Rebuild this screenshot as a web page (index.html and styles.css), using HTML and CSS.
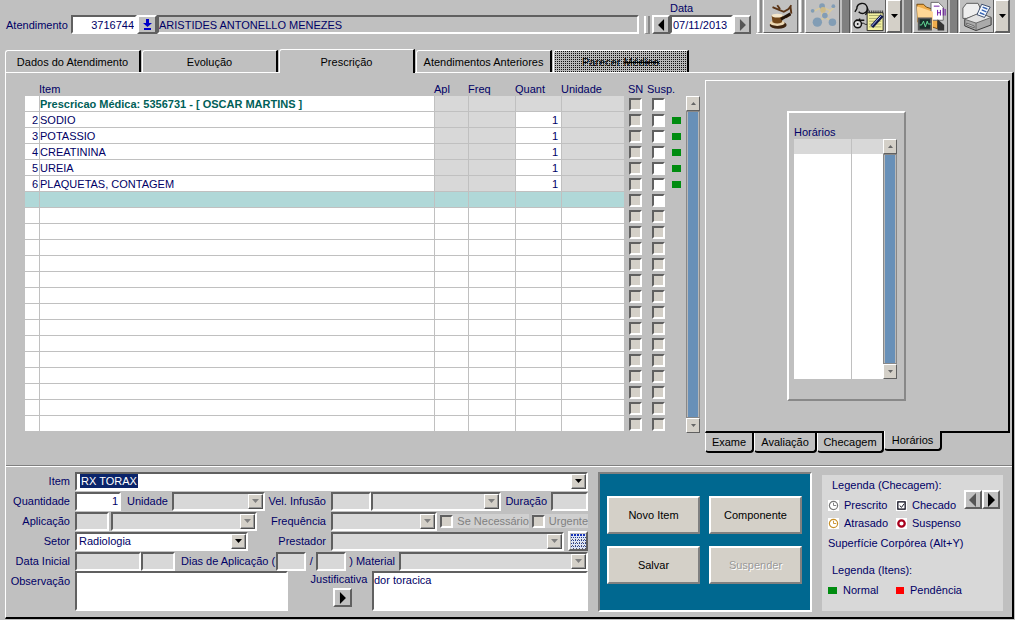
FILE: index.html
```html
<!DOCTYPE html>
<html lang="pt-BR">
<head>
<meta charset="utf-8">
<title>Prescrição</title>
<link rel="stylesheet" href="styles.css">
</head>
<body>
<svg class="symbols" aria-hidden="true">
  <symbol id="down" viewBox="0 0 7 4"><path d="M0 0h7L3.500 4z" fill="currentColor"/></symbol>
  <symbol id="up" viewBox="0 0 7 4"><path d="M0 4h7L3.500 0z" fill="currentColor"/></symbol>
  <symbol id="left" viewBox="0 0 8 14"><path d="M7 0v14L0 7z" fill="currentColor"/></symbol>
  <symbol id="right" viewBox="0 0 8 14"><path d="M1 0v14L8 7z" fill="currentColor"/></symbol>
  <symbol id="clock" viewBox="0 0 12 12"><path fill="#fff" d="M0 0h12v12H0z"/><circle cx="6" cy="6" r="4.500" fill="none" stroke="currentColor" stroke-width="1.300"/><path d="M6 3v3h3" fill="none" stroke="currentColor"/></symbol>
</svg>

<header class="topbar">
  <label for="atend">Atendimento</label>
  <div class="patient">
    <input id="atend" class="field num atend" value="3716744">
    <button class="btn lookup" aria-label="Pesquisar"><svg width="9" height="11" viewBox="0 0 9 11"><path d="M3 0h3v4h3L4.500 8 0 4h3zM1 9h7v2H1z" fill="#0000c8"/></svg></button>
    <input class="field flat name" value="ARISTIDES ANTONELLO MENEZES" readonly aria-label="Paciente">
  </div>
  <span class="grip"></span>
  <div class="date">
    <button class="btn nav" aria-label="Dia anterior"><svg width="7" height="12"><use href="#left"/></svg></button>
    <div class="dateField"><label for="data">Data</label><input id="data" class="field" value="07/11/2013"></div>
    <button class="btn nav dim" aria-label="Próximo dia"><svg width="7" height="12"><use href="#right"/></svg></button>
  </div>
  <div class="toolbar">
    <span class="grip tall"></span>
    <button class="btn tool" aria-label="Condutas"><svg width="32" height="31" viewBox="0 0 34 32">
      <path d="M8 6l7 3 5 2 5-3 3-4M13 4l3 4M27 14l-5 3M27 5l1 8" fill="none" stroke="#5a3416" stroke-width="2"/>
      <ellipse cx="14" cy="25" rx="9" ry="4" fill="#3d2410"/><ellipse cx="13" cy="23" rx="8" ry="3" fill="#ecd8b4"/>
      <path d="M7 15h12l-1 7q-5 3-10 0z" fill="#714619"/><ellipse cx="13" cy="15" rx="6" ry="2" fill="#f5e7cb"/><path d="M17 19l10-6" stroke="#201208" stroke-width="3"/></svg></button>
    <span class="grip tall"></span>
    <button class="btn tool" disabled aria-label="Relações"><svg width="32" height="31" viewBox="0 0 34 32">
      <path d="M6 11l10-5 9 4-6 7-8 5M16 6v9l12 7M25 10l4-4" fill="none" stroke="#d8c99c" stroke-width="1.500"/>
      <g fill="#829db5"><circle cx="11" cy="22" r="5"/><circle cx="27" cy="22" r="4"/><circle cx="16" cy="5" r="3"/><circle cx="6" cy="10" r="2"/><circle cx="28" cy="5" r="2"/><circle cx="19" cy="15" r="3"/></g><circle cx="17" cy="9" r="3" fill="#cdbb88"/></svg></button>
    <span class="bar"></span>
    <button class="btn tool" aria-label="Exame clínico"><svg width="32" height="31" viewBox="0 0 34 32">
      <path d="M4 8c0-7 9-8 11-2 1 6-5 9-9 5M4 8l-2 3M15 6c2 4 0 7-2 8M3 20h9M7 18v10" fill="none" stroke="#111" stroke-width="1.500"/><circle cx="5" cy="24" r="4" fill="#ddd" stroke="#111" stroke-width="1.500"/><circle cx="5" cy="24" r="1" fill="#111"/><path d="M9 24c2-3 4 2 6 0" fill="none" stroke="#111"/>
      <path d="M15 12h17v19H15z" fill="#f4f2a0" stroke="#222"/><path d="M17 15h13M17 18h13M17 21h13M17 24h13M17 27h13" stroke="#a5a76a"/><path d="M15 11h17" stroke="#333" stroke-dasharray="1 1" stroke-width="3"/><path d="M31 15L20 27" stroke="#111848" stroke-width="4"/><path d="M30 15L20 26" stroke="#b8c4ff"/></svg></button><button class="btn drop" aria-label="Mais exames"><svg width="7" height="4"><use href="#down"/></svg></button>
    <span class="bar"></span>
    <button class="btn tool" aria-label="Resultados"><svg width="32" height="31" viewBox="0 0 34 32">
      <path d="M2 3h7l3 3 12 4v19L3 22z" fill="#f0ad4c" stroke="#704509"/><path d="M17 1h8l5 5v14H17z" fill="#fff" stroke="#666"/><path d="M20 5h6M24 9v6m3-6v6m-3-3h3m3-5v8m2-7v7" stroke="#6811a0"/><path d="M2 5l17 6v19L3 24z" fill="#ffd795"/><path d="M24 19l7 6v6h-7z" fill="#333"/>
      <path d="M4 18h13v12H4z" fill="#172c2a" stroke="#555" stroke-width="2"/><path d="M5 25h2l2-4 2 6 2-6 1 3h3" fill="none" stroke="#66e39b"/></svg></button>
    <span class="bar"></span>
    <button class="btn tool" aria-label="Imprimir"><svg width="32" height="31" viewBox="0 0 34 32">
      <path d="M2 7l4-5h12l2 4v12H2z" fill="#eee" stroke="#555"/><path d="M4 19l15-6 13 4v8l-16 6-12-5z" fill="#aaa" stroke="#333"/><path d="M4 19l12 4 16-6-12-5z" fill="#e2e2e2" stroke="#666"/><path d="M16 23v8M6 23l8 3v2l-8-3z" stroke="#666" fill="#ccc"/><path d="M17 14l5-11 9 3-6 11z" fill="#f7fbff" stroke="#346"/><path d="M23 6l5 2M22 9l5 2M20 12l5 2" stroke="#3764b5" stroke-width="1.500"/></svg></button><button class="btn drop" aria-label="Mais impressões"><svg width="7" height="4"><use href="#down"/></svg></button>
  </div>
</header>

<nav class="tabs">
  <button class="tab">Dados do Atendimento</button>
  <button class="tab">Evolução</button>
  <button class="tab active">Prescrição</button>
  <button class="tab">Atendimentos Anteriores</button>
  <button class="tab dither" disabled>Parecer <s>Médico</s></button>
</nav>

<main class="page">
  <section class="upper">
    <div class="list">
      <table class="items">
        <colgroup><col class="cNum"><col><col class="cApl"><col class="cFreq"><col class="cQuant"><col class="cUnid"><col class="cBox"><col class="cBox"><col class="cMark"></colgroup>
        <thead><tr><th></th><th>Item</th><th>Apl</th><th>Freq</th><th>Quant</th><th>Unidade</th><th class="sn">SN</th><th>Susp.</th><th></th></tr></thead>
        <tbody id="rows"></tbody>
      </table>
      <div class="scroll listScroll"><button class="btn" aria-label="Subir"><svg width="5" height="3"><use href="#up"/></svg></button><span></span><button class="btn" aria-label="Descer"><svg width="5" height="3"><use href="#down"/></svg></button></div>
    </div>
    <aside class="side">
      <div class="sideBody">
        <div class="frame">
          <div class="frameTitle">Horários</div>
          <div class="hours">
            <div class="hcol wide"></div><div class="hcol"></div>
            <div class="scroll"><button class="btn" aria-label="Subir"><svg width="5" height="3"><use href="#up"/></svg></button><span></span><button class="btn" aria-label="Descer"><svg width="5" height="3"><use href="#down"/></svg></button></div>
          </div>
        </div>
      </div>
      <nav class="bottomTabs"><button>Exame</button><button>Avaliação</button><button>Checagem</button><button class="on">Horários</button></nav>
    </aside>
  </section>

  <section class="lower">
    <form class="form">
      <div class="row">
        <label for="item">Item</label>
        <div class="cells span"><div class="combo on grow pad"><input id="item" class="marked" value="RX TORAX"><i><svg width="7" height="4"><use href="#down"/></svg></i></div></div>
      </div>
      <div class="row">
        <label for="qtd">Quantidade</label>
        <div class="cells"><input id="qtd" class="field num w46" value="1"><label class="lead" for="unid">Unidade</label><div class="combo w93 push"><select id="unid" disabled></select><i><svg width="7" height="4"><use href="#down"/></svg></i></div></div>
        <label for="vel">Vel. Infusão</label>
        <div class="cells"><input id="vel" class="field off w40" disabled><div class="combo grow"><select disabled aria-label="Unidade de infusão"></select><i><svg width="7" height="4"><use href="#down"/></svg></i></div><label class="mid" for="dur">Duração</label><input id="dur" class="field off w37" disabled></div>
      </div>
      <div class="row">
        <label for="apl">Aplicação</label>
        <div class="cells gap"><input id="apl" class="field off w34" disabled><div class="combo w145"><select disabled aria-label="Via de aplicação"></select><i><svg width="7" height="4"><use href="#down"/></svg></i></div></div>
        <label for="freq">Frequência</label>
        <div class="cells"><div class="combo grow"><select id="freq" disabled></select><i><svg width="7" height="4"><use href="#down"/></svg></i></div><label class="check"><input type="checkbox" class="box beige" disabled>Se Necessário</label><label class="check"><input type="checkbox" class="box beige" disabled>Urgente</label></div>
      </div>
      <div class="row">
        <label for="setor">Setor</label>
        <div class="cells"><div class="combo on w173"><select id="setor"><option>Radiologia</option></select><i><svg width="7" height="4"><use href="#down"/></svg></i></div></div>
        <label for="prest">Prestador</label>
        <div class="cells"><div class="combo grow"><select id="prest" disabled></select><i><svg width="7" height="4"><use href="#down"/></svg></i></div><button type="button" class="btn grid" aria-label="Agenda"><svg width="15" height="15" viewBox="0 0 15 15"><path d="M0 0h15v15H0z" fill="#dde4f4"/><path d="M0 1h15" stroke="#1633b8" stroke-width="2" stroke-dasharray="2 1"/><path d="M0 3.500h15M0 6.500h15M0 9.500h15M0 12.500h15" stroke="#27408c" stroke-dasharray="1 1"/><path d="M1 5.500h14M2 8.500h13M1 11.500h14M2 14.500h13" stroke="#556" stroke-dasharray="1 2"/></svg></button></div>
      </div>
      <div class="row">
        <label for="dini">Data Inicial</label>
        <div class="cells span"><input id="dini" class="field off w65" disabled><input class="field off w34" disabled aria-label="Hora inicial"><label class="lead" for="d1">Dias de Aplicação (</label><input id="d1" class="field off w30" disabled><span class="slash">/</span><input class="field off w30" disabled aria-label="Total de dias"><label class="paren" for="mat">) Material</label><div class="combo grow"><select id="mat" disabled></select><i><svg width="7" height="4"><use href="#down"/></svg></i></div></div>
      </div>
      <div class="row tall">
        <label for="obs">Observação</label>
        <div class="cells span stretch"><textarea id="obs" class="field w213"></textarea><div class="just"><label for="just">Justificativa</label><button type="button" class="btn" aria-label="Abrir justificativa"><svg width="7" height="12"><use href="#right"/></svg></button></div><textarea id="just" class="field grow">dor toracica</textarea></div>
      </div>
    </form>

    <div class="actions">
      <button>Novo Item</button><button>Componente</button>
      <button>Salvar</button><button disabled>Suspender</button>
    </div>

    <aside class="legend">
      <div class="legendTop">
        <div>
          <h2>Legenda (Checagem):</h2>
          <ul class="keys">
            <li><svg width="11" height="11" color="#777"><use href="#clock"/></svg>Prescrito</li>
            <li><svg width="11" height="11" viewBox="0 0 12 12"><path fill="#fff" d="M0 0h12v12H0z"/><path d="M2 2h8v8H2z" fill="#fff" stroke="#001" stroke-width="1.300"/><path d="M4 6l2 2 3-4" fill="none" stroke="#001"/></svg>Checado</li>
            <li><svg width="11" height="11" color="#c8912a"><use href="#clock"/></svg>Atrasado</li>
            <li><svg width="11" height="11" viewBox="0 0 12 12"><path fill="#fff" d="M0 0h12v12H0z"/><circle cx="6" cy="6" r="3.500" fill="#fff" stroke="#a8001c" stroke-width="2.500"/></svg>Suspenso</li>
          </ul>
        </div>
        <div class="pager"><button class="btn dim" aria-label="Anterior"><svg width="8" height="14"><use href="#left"/></svg></button><button class="btn" aria-label="Próximo"><svg width="8" height="14"><use href="#right"/></svg></button></div>
      </div>
      <p>Superfície Corpórea (Alt+Y)</p>
      <h2>Legenda (Itens):</h2>
      <ul class="keys"><li><b class="mark"></b>Normal</li><li><b class="mark red"></b>Pendência</li></ul>
    </aside>
  </section>
</main>
<script src="app.js"></script>
</body>
</html>
```
FILE: styles.css
```css
* { box-sizing: border-box; }
body, button, input, select, textarea { font-family: "Liberation Sans", Arial, sans-serif; font-size: 11px; line-height: 14px; color: #000066; }
body { margin: 0; background: #c0c0c0; padding: 0 1px 2px 5px; }
button { color: #000; padding: 0; margin: 0; }
h2, p, ul { margin: 0; padding: 0; font-size: 11px; font-weight: normal; list-style: none; }
label { white-space: nowrap; }
svg { display: block; flex: none; }
.symbols { position: absolute; width: 0; height: 0; }

.field { display: block; min-width: 0; height: 19px; padding: 0 1px; margin: 0; border: 2px solid; border-color: #606060 #fff #fff #606060; border-radius: 0; background: #fff; outline: 0; resize: none; }
.flat { background: #c0c0c0; }
.off { background: #d8d8d8; }
.num { text-align: right; }
.btn { display: flex; align-items: center; justify-content: center; background: #c0c0c0; border: 2px solid; border-color: #fff #606060 #606060 #fff; }
.dim { color: #555; }
.grow { flex: 1; min-width: 0; }

.topbar { display: flex; align-items: flex-end; height: 34px; padding-right: 4px; }
.topbar > label { width: 66px; padding: 0 0 2px 1px; }
.patient { display: flex; flex: 1; min-width: 0; }
.patient .name { flex: 1; padding: 0; }
.atend { width: 66px; }
.lookup { width: 20px; height: 19px; }
.grip { width: 6px; height: 18px; margin: 0 2px 0 5px; border: solid; border-width: 0 2px 1px 2px; border-color: #fff #888 #888 #fff; }
.date { display: flex; align-items: flex-end; }
.dateField { width: 63px; }
.dateField label { display: block; line-height: 13px; }
.dateField input { width: 100%; }
.nav { width: 18px; height: 19px; }
.toolbar { display: flex; align-items: flex-end; height: 35px; margin-left: 5px; border-bottom: 1px solid #fff; }
.toolbar .tall { height: 34px; width: 5px; margin: 0 1px; }
.tool { width: 35px; height: 34px; border-width: 1px; }
.drop { width: 16px; height: 34px; background: #d4d0c8; }
.bar { width: 8px; height: 34px; margin: 0 1px 0 2px; background: #808080; border-right: 1px solid #555; }

.tabs { display: flex; align-items: flex-end; gap: 1px; padding-top: 15px; }
.tab { width: 136px; height: 22px; background: #c0c0c0; border: 0; border-top: 1px solid #fff; border-left: 1px solid #fff; border-right: 2px solid #000; border-top-left-radius: 3px; white-space: nowrap; }
.tab.active { position: relative; height: 24px; margin-bottom: -1px; }
.tab.dither { color: #000; background: conic-gradient(#101010 0 25%, #b8b8b8 0) 0 0 / 2px 2px; }

.page { border: solid; border-width: 1px 2px 2px 1px; border-color: #fff #000 #000 #fff; }
.upper { display: flex; gap: 5px; padding: 7px 2px 12px 19px; }
.list { display: flex; flex: 1; align-items: flex-start; min-width: 0; padding-top: 3px; }
.items { flex: 1; width: 100%; min-width: 0; table-layout: fixed; border-collapse: separate; border-spacing: 0; }
.cNum { width: 14px; } .cApl { width: 34px; } .cFreq { width: 47px; } .cQuant { width: 46px; } .cUnid { width: 63px; } .cBox { width: 23px; } .cMark { width: 14px; }
.items th { height: 13px; padding: 0; font-weight: normal; text-align: left; line-height: 13px; white-space: nowrap; }
.items .sn { padding-left: 4px; }
.items td { height: 16px; padding: 0; line-height: 14px; border: 0 solid #c0c0c0; white-space: nowrap; }
.items .c { background: #fff; border-width: 0 0 1px 1px; }
.items .c:first-child { border-left: 0; text-align: right; padding-right: 1px; }
.items .c.g { background: #d8d8d8; }
.items .q { text-align: right; padding-right: 3px; }
.items .current .c { background: #b0d8d8; }
.items .title { color: #006058; font-weight: bold; }
.items .b { padding-left: 5px; }
.box { appearance: none; display: block; flex: none; width: 13px; height: 13px; margin: 0; border: 2px solid; border-color: #606060 #fff #fff #606060; background: #fff; }
.beige { background: #d4d0c8; }
.mark { display: block; width: 9px; height: 7px; background: #008c10; }
.items .mark { margin-left: 2px; }
.red { background: #f00; }

.scroll { display: flex; flex-direction: column; flex: none; width: 14px; }
.scroll span { flex: 1; background: #6890b8; border: solid #b8b8b8; border-width: 0 2px; outline: 1px solid #888; outline-offset: -1px; }
.scroll .btn { height: 15px; background: #d4d0c8; border-width: 1px; color: #666; }
.listScroll { align-self: stretch; margin: 13px 0 20px 2px; }

.side { flex: none; width: 305px; }
.sideBody { height: 353px; padding: 30px 0 0 81px; border: solid; border-width: 1px 2px 2px 1px; border-color: #fff #000 #000 #fff; }
.frame { width: 119px; padding: 13px 7px 20px 5px; border: 2px solid; border-color: #fff #888 #888 #fff; }
.frameTitle { line-height: 13px; }
.hours { display: flex; height: 240px; }
.hcol { flex: 1; background: linear-gradient(#d8d8d8 15px, #fff 15px); }
.hcol.wide { flex: none; width: 58px; border-right: 1px solid #c0c0c0; }
.bottomTabs { display: flex; }
.bottomTabs button { width: 63px; height: 20px; background: #c0c0c0; border: solid #000; border-width: 0 2px 2px 0; border-left: 1px solid #fff; border-radius: 0 0 4px 4px; }
.bottomTabs button:first-child { width: 49px; }
.bottomTabs button:nth-child(3) { width: 67px; }
.bottomTabs .on { position: relative; width: 58px; margin-top: -2px; }

.lower { display: flex; gap: 10px; padding: 5px 9px 5px 0; border-top: 1px solid #808080; box-shadow: inset 0 1px #fff; }
.form { flex: 1; min-width: 0; }
.row { display: grid; grid-template-columns: 64px 190px 56px 1fr; column-gap: 5px; align-items: center; height: 20px; }
.row > label { justify-self: end; text-align: right; }
.row > .span { grid-column: 2 / -1; }
.cells { display: flex; align-items: center; min-width: 0; }
.cells.gap { gap: 2px; }
.tall { height: 40px; align-items: start; }
.row.tall > label { padding-top: 3px; }
.stretch { align-items: stretch; height: 40px; }
.stretch textarea { height: 40px; padding: 0; }
.combo { display: flex; height: 19px; background: #d8d8d8; border: 2px solid; border-color: #606060 #fff #fff #606060; color: #808080; }
.combo.pad { padding-left: 3px; align-items: center; }
.combo.on { background: #fff; color: #000; }
.combo select { appearance: none; flex: 1; min-width: 0; padding: 0 2px; border: 0; background: transparent; outline: 0; }
.combo i { display: flex; align-items: center; justify-content: center; width: 15px; height: 15px; margin-left: auto; background: #d4d0c8; border: 1px solid; border-color: #fff #505050 #505050 #fff; box-shadow: inset -1px -1px #999; }
.marked { width: 58px; height: 14px; padding: 0 1px; border: 0; background: #0a246a; color: #fff; outline: 0; }
.w30 { width: 30px; } .w34 { width: 34px; } .w37 { width: 37px; } .w40 { width: 40px; } .w46 { width: 46px; } .w65 { width: 66px; } .w93 { width: 93px; } .w145 { width: 146px; } .w173 { width: 173px; } .w213 { width: 213px; }
.lead { padding: 0 1px 0 6px; }
.push { margin-left: auto; }
.mid { padding: 0 4px; }
.slash { width: 10px; text-align: center; }
.paren { padding: 0 4px 0 3px; }
.check { display: flex; align-items: center; gap: 4px; margin-left: 3px; background: #d0d0d0; color: #808080; }
.grid { width: 20px; height: 20px; margin-left: 4px; }
.just { display: flex; flex-direction: column; align-items: center; width: 84px; padding-left: 18px; gap: 1px; }
.just label { line-height: 16px; }
.just .btn { width: 19px; height: 19px; margin-left: 6px; }

.actions { display: grid; grid-template-columns: 1fr 1fr; grid-auto-rows: 38px; gap: 12px 9px; align-content: center; flex: none; width: 214px; height: 140px; padding: 0 8px 4px 7px; background: #006890; border: 2px solid; border-color: #808080 #fff #fff #808080; margin-top: 1px; }
.actions button { background: #d4d0c8; border: 2px solid; border-color: #fff #808080 #808080 #fff; }
.actions button:disabled { color: #999; text-shadow: 1px 1px #fff; }
.legend { flex: none; width: 181px; height: 136px; margin-top: 4px; padding: 3px 3px 0 6px; background: #d8d8d8; }
.legend h2 { padding-left: 4px; }
.legendTop { display: flex; }
.keys { display: grid; grid-template-columns: 68px 66px; padding-top: 4px; }
.keys li { display: flex; align-items: center; gap: 5px; height: 18px; white-space: nowrap; }
.legend p { padding: 4px 0 13px; }
.legend > .keys .mark { margin-right: 1px; }
.pager { display: flex; margin: 12px 0 0 2px; }
.pager .btn { width: 18px; height: 19px; }
```
FILE: app.js
```js
const items = ["SODIO", "POTASSIO", "CREATININA", "UREIA", "PLAQUETAS, CONTAGEM"];
const body = document.getElementById("rows");
const TOTAL = 21;
let html = "";
for (let i = 0; i < TOTAL; i++) {
  const item = i > 0 && i <= items.length ? items[i - 1] : "";
  const grey = i <= items.length ? " g" : "";
  const text = i === 0 ? "Prescricao Médica: 5356731 - [ OSCAR MARTINS ]" : item;
  const susp = i <= items.length + 1 ? "" : " beige";
  html += `<tr class="${i === items.length + 1 ? "current" : ""}">
    <td class="c">${item ? i + 1 : ""}</td>
    <td class="c${i === 0 ? " title" : ""}">${text}</td>
    <td class="c${grey}"></td><td class="c${grey}"></td>
    <td class="c q${i === 0 ? grey : ""}">${item ? 1 : ""}</td>
    <td class="c${grey}"></td>
    <td class="b"><input type="checkbox" class="box beige" aria-label="SN linha ${i + 1}"></td>
    <td class="b"><input type="checkbox" class="box${susp}" aria-label="Suspender linha ${i + 1}"></td>
    <td>${item ? '<b class="mark"></b>' : ""}</td></tr>`;
}
body.innerHTML = html;
```
